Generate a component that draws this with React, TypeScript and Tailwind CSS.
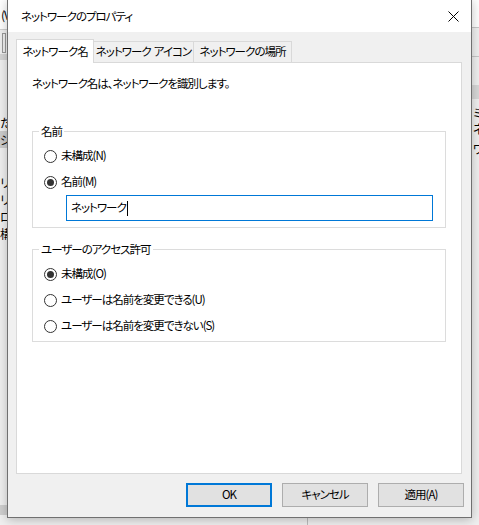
import React from 'react';

const font = "font-['Yu_Gothic_UI','Noto_Sans_CJK_JP',sans-serif] [font-feature-settings:'palt'] tracking-[-1px]";

const Radio = ({ checked, label }: { checked?: boolean; label: string }) => (
  <div className="flex items-center h-[18px]">
    <span className="w-[13px] h-[13px] shrink-0 rounded-full border border-[#333] bg-white flex items-center justify-center">
      {checked && <span className="w-[7px] h-[7px] rounded-full bg-[#333]" />}
    </span>
    <span className="ml-[4px] text-[11.5px] leading-none text-black whitespace-nowrap">{label}</span>
  </div>
);

const Group = ({ title, children, className }: any) => (
  <div className={`relative border border-[#dcdcdc] ${className}`}>
    <span className="absolute -top-[8px] left-[6px] bg-white px-[2px] text-[11.5px] leading-[14px] text-black whitespace-nowrap">{title}</span>
    {children}
  </div>
);

const Button = ({ label, primary }: { label: string; primary?: boolean }) => (
  <button
    className={`w-[86px] h-[24px] bg-[#e1e1e1] text-[11.5px] text-black flex items-center justify-center ${
      primary ? 'border-2 border-[#0078d7]' : 'border border-[#adadad]'
    }`}
  >
    {label}
  </button>
);

export default function App() {
  return (
    <div className={`relative w-[479px] h-[525px] overflow-hidden bg-[#f0f0f0] ${font}`}>
      {/* window behind the dialog */}
      <div className="absolute inset-0 text-[12px] text-black">
        <div className="h-[30px] bg-white border-b border-[#d0d0d0] pl-[1px] pt-[9px] leading-none">(V</div>
        <div className="h-[20px] w-[4px] ml-[2px] mt-[3px] border border-[#999]" />
        <div className="h-[6px] bg-[#d4d4d4] mt-[1px]" />
        <div className="pt-[54px] leading-[17px]">
          <div>た</div>
          <div className="bg-[#cccccc]">シ</div>
          <div className="mt-[26px]">リ</div>
          <div>リ</div>
          <div>ロ</div>
          <div>構</div>
        </div>
        <div className="absolute left-0 right-0 bottom-[10px] h-[10px] bg-[#cfcfcf]" />
        <div className="absolute left-[307px] bottom-0 h-[7px] w-px bg-[#bdbdbd]" />
        <div className="absolute right-0 top-0 w-[8px] h-full bg-[#f0f0f0] overflow-hidden">
          <div className="h-[28px] bg-white border-b border-[#c8c8c8]" />
          <div className="h-[29px] border-b border-[#c8c8c8]" />
          <div className="h-[14px] mt-[28px] bg-[#d8d8d8]" />
          <div className="pt-[6px] leading-[16px] pl-[2px]">
            <div>ミ</div>
            <div>ネ</div>
            <div className="mt-[4px]">ワ</div>
          </div>
        </div>
      </div>

      {/* dialog */}
      <div className="absolute left-[7px] top-[-1px] w-[465px] h-[519px] border border-[#707070] bg-[#f0f0f0] shadow-[0_2px_10px_rgba(0,0,0,0.25)] flex flex-col">
        <div className="h-[32px] bg-white flex items-center justify-between pl-[13px] pr-[10px] pt-[1px]">
          <span className="text-[11.5px] text-black">ネットワークのプロパティ</span>
          <svg width="11" height="11" viewBox="0 0 11 11" className="mr-[2px]">
            <path d="M0.5 0.5 L10.5 10.5 M10.5 0.5 L0.5 10.5" stroke="#000" strokeWidth="1" />
          </svg>
        </div>

        <div className="flex-1 flex flex-col pl-[8px] pr-[9px] pt-[7px]">
          {/* tabs */}
          <div className="flex items-end h-[24px] text-[11.5px] text-black relative z-10 whitespace-pre">
            <div className="h-[24px] shrink-0 bg-white border border-b-0 border-[#d9d9d9] flex items-center justify-center w-[78px]">ネットワーク名</div>
            <div className="h-[22px] shrink-0 bg-[#f0f0f0] border border-l-0 border-[#d9d9d9] flex items-center justify-center w-[100px]">ネットワーク  アイコン</div>
            <div className="h-[22px] shrink-0 bg-[#f0f0f0] border border-l-0 border-[#d9d9d9] flex items-center justify-center w-[98px]">ネットワークの場所</div>
          </div>
          <div className="h-[412px] bg-white border border-[#d9d9d9] -mt-px px-[15px] pt-[13px]">
            <div className="text-[11.5px] text-black leading-[14px]">ネットワーク名は、ネットワークを識別します。</div>

            <Group title="名前" className="mt-[41px] h-[97px] pl-[11px] pt-[15px]">
              <Radio label="未構成(N)" />
              <div className="mt-[8px]">
                <Radio checked label="名前(M)" />
              </div>
              <div className="mt-[4px] ml-[22px] mr-[12px] h-[26px] border border-[#0078d7] flex items-center pl-[4px] text-[11.5px] text-black">
                ネットワーク<span className="inline-block w-px h-[15px] bg-black ml-[1px]" />
              </div>
            </Group>

            <Group title="ユーザーのアクセス許可" className="mt-[21px] h-[93px] pl-[11px] pt-[15px] flex flex-col gap-[8px]">
              <Radio checked label="未構成(O)" />
              <Radio label="ユーザーは名前を変更できる(U)" />
              <Radio label="ユーザーは名前を変更できない(S)" />
            </Group>
          </div>

          <div className="flex justify-end gap-[10px] mt-[9px] mr-[-2px]">
            <Button primary label="OK" />
            <Button label="キャンセル" />
            <Button label="適用(A)" />
          </div>
        </div>
      </div>
    </div>
  );
}
